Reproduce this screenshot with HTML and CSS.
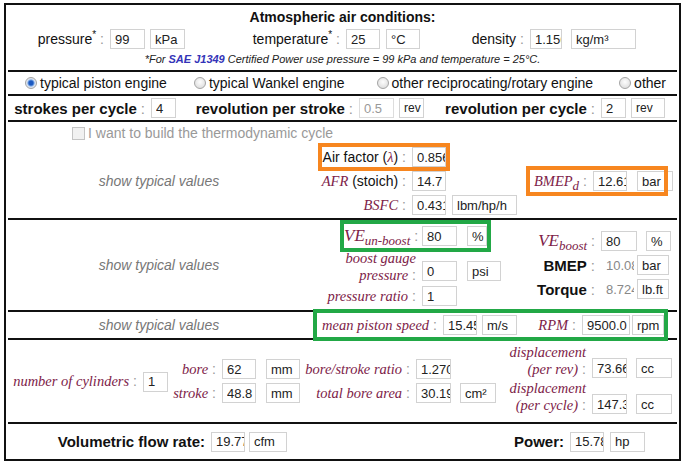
FILE: index.html
```html
<!DOCTYPE html>
<html lang="en">
<head>
  <meta charset="UTF-8">
  <meta name="viewport" content="width=device-width, initial-scale=1.0">
  <title>Engine Power Calculator</title>
  <link rel="stylesheet" href="styles.css">
</head>
<body>

<div class="calc">

  <!-- ambient air -->
  <div class="sec air">
    <div class="title">Atmospheric air conditions:</div>
    <div class="row air-row">
      <span class="lbl w96">pressure<sup>*</sup><span class="c">:</span></span>
      <input class="in w35" value="99">
      <input class="in w35 ml5" value="kPa">
      <span class="lbl w155">temperature<sup>*</sup><span class="c">:</span></span>
      <input class="in w34" value="25">
      <input class="in w34 ml6" value="°C">
      <span class="lbl w104">density<span class="c">:</span></span>
      <input class="in w32" value="1.1568">
      <input class="in w65 ml9" value="kg/m³">
    </div>
    <div class="note">*For <a href="#">SAE J1349</a> Certified Power use pressure = 99 kPa and temperature = 25°C.</div>
  </div>

  <!-- engine type -->
  <div class="sec engines">
    <label class="opt"><input type="radio" name="engine" checked>typical piston engine</label>
    <label class="opt ml27"><input type="radio" name="engine">typical Wankel engine</label>
    <label class="opt ml32"><input type="radio" name="engine">other reciprocating/rotary engine</label>
    <label class="opt ml26"><input type="radio" name="engine">other</label>
  </div>

  <div class="sec row strokes">
    <span class="lbl b w137">strokes per cycle<span class="c">:</span></span>
    <input class="in w25" value="4">
    <span class="lbl b w177">revolution per stroke<span class="c">:</span></span>
    <input class="in w35" value="0.5" disabled>
    <input class="in w25 ml5 small" value="rev">
    <span class="lbl b w171">revolution per cycle<span class="c">:</span></span>
    <input class="in w25" value="2">
    <input class="in w34 ml5 small" value="rev">
  </div>

  <!-- fuel -->
  <div class="sec fuel">
    <label class="thermo"><input type="checkbox" disabled>I want to build the thermodynamic cycle</label>
    <div class="cols">
      <div class="typical">show typical values</div>
      <div class="mid">
        <div class="row r24">
          <span class="hl orange ml12">
            <span class="lbl w84">Air factor (<i class="sym">λ</i>)<span class="c">:</span></span>
            <input class="in w34" value="0.8566">
          </span>
        </div>
        <div class="row r24">
          <span class="lbl w96"><i class="sym">AFR</i> (stoich)<span class="c">:</span></span>
          <input class="in w34" value="14.7">
        </div>
        <div class="row r24">
          <span class="lbl w96"><i class="sym">BSFC</i><span class="c">:</span></span>
          <input class="in w34" value="0.431">
          <input class="in w65 ml6" value="lbm/hp/h">
        </div>
      </div>
      <div class="side pt24">
        <div class="row r24">
          <span class="hl orange bmepd ml13">
            <span class="lbl w57"><i class="sym">BMEP<sub>d</sub></i><span class="c">:</span></span>
            <input class="in w34" value="12.61">
            <input class="in w36 ml10" value="bar">
          </span>
        </div>
      </div>
    </div>
  </div>

  <!-- breathing -->
  <div class="sec cols boost">
    <div class="typical">show typical values</div>
    <div class="mid pt4">
      <div class="row r24">
        <span class="hl green ml34">
          <span class="lbl w72"><i class="sym big">VE<sub>un-boost</sub></i><span class="c">:</span></span>
          <input class="in w35" value="80">
          <input class="in w20 ml10" value="%">
        </span>
      </div>
      <div class="row r34">
        <span class="lbl w106 two"><i class="sym">boost gauge<br>pressure</i><span class="c">:</span></span>
        <input class="in w35 mb3" value="0">
        <input class="in w34 ml10 mb3" value="psi">
      </div>
      <div class="row r20">
        <span class="lbl w106"><i class="sym">pressure ratio</i><span class="c">:</span></span>
        <input class="in w35" value="1">
      </div>
    </div>
    <div class="side pt9">
      <div class="row r24">
        <span class="lbl w78"><i class="sym big">VE<sub>boost</sub></i><span class="c">:</span></span>
        <input class="in w36" value="80">
        <input class="in w25 ml9" value="%">
      </div>
      <div class="row r24">
        <span class="lbl b w78">BMEP<span class="c">:</span></span>
        <input class="in w34 out" value="10.08" readonly>
        <input class="in w32 ml2" value="bar">
      </div>
      <div class="row r24">
        <span class="lbl b w78">Torque<span class="c">:</span></span>
        <input class="in w34 out" value="8.724" readonly>
        <input class="in w32 ml2" value="lb.ft">
      </div>
    </div>
  </div>

  <div class="sec cols speed">
    <div class="typical">show typical values</div>
    <div class="row">
      <span class="hl green ml7">
        <span class="lbl w120"><i class="sym">mean piston speed</i><span class="c">:</span></span>
        <input class="in w34" value="15.45">
        <input class="in w35 ml5" value="m/s">
        <span class="lbl w59"><i class="sym">RPM</i><span class="c">:</span></span>
        <input class="in w48" value="9500.0">
        <input class="in w32 ml2" value="rpm">
      </span>
    </div>
  </div>

  <!-- geometry -->
  <div class="sec geo">
    <div class="row cyl">
      <span class="lbl w129"><i class="sym">number of cylinders</i><span class="c">:</span></span>
      <input class="in w25" value="1">
    </div>
    <div class="stack pt17">
      <div class="row r24">
        <span class="lbl w48"><i class="sym">bore</i><span class="c">:</span></span>
        <input class="in w34" value="62">
        <input class="in w34 ml10" value="mm">
      </div>
      <div class="row r24">
        <span class="lbl w48"><i class="sym">stroke</i><span class="c">:</span></span>
        <input class="in w34" value="48.8">
        <input class="in w34 ml10" value="mm">
      </div>
    </div>
    <div class="stack pt17">
      <div class="row r24">
        <span class="lbl w110"><i class="sym">bore/stroke ratio</i><span class="c">:</span></span>
        <input class="in w35" value="1.2705">
      </div>
      <div class="row r24">
        <span class="lbl w110"><i class="sym">total bore area</i><span class="c">:</span></span>
        <input class="in w35" value="30.19">
        <input class="in w36 ml9" value="cm²">
      </div>
    </div>
    <div class="stack pt4">
      <div class="row r34">
        <span class="lbl w90 two"><i class="sym">displacement<br>(per rev)</i><span class="c">:</span></span>
        <input class="in w35" value="73.66">
        <input class="in w36 ml9" value="cc">
      </div>
      <div class="row r34">
        <span class="lbl w90 two"><i class="sym">displacement<br>(per cycle)</i><span class="c">:</span></span>
        <input class="in w35" value="147.3">
        <input class="in w36 ml9" value="cc">
      </div>
    </div>
  </div>

  <div class="sec row totals">
    <span class="lbl b w197">Volumetric flow rate:</span>
    <input class="in w34" value="19.77">
    <input class="in w38 ml4" value="cfm">
    <span class="lbl b w277">Power:</span>
    <input class="in w34" value="15.78">
    <input class="in w35 ml6" value="hp">
  </div>

</div>

</body>
</html>
```

FILE: styles.css
```css
* {
  box-sizing: border-box;
}

body {
  margin: 0;
  background-color: #fff;
  color: #111;
  font-family: "Liberation Sans", Arial, sans-serif;
  font-size: 14px;
}

.calc {
  width: 677px;
  margin: 3px 0 0 4px;
  padding: 0 2px;
  border: 2px solid #111;
}

.sec {
  border-bottom: 2px solid #111;
}

.sec:last-child {
  border-bottom: 0;
}

.row {
  display: flex;
  align-items: center;
}

/* labels sit right-aligned against their field */
.lbl {
  flex-shrink: 0;
  margin-right: 6px;
  text-align: right;
  white-space: nowrap;
}

.lbl.b {
  font-size: 15px;
  font-weight: bold;
}

.lbl.two {
  white-space: normal;
  line-height: 17px;
}

.c {
  margin-left: 4px;
  color: #999;
  font-weight: normal;
  font-style: normal;
}

sup {
  font-size: 10px;
  line-height: 0;
}

.sym {
  font-family: "Liberation Serif", "Times New Roman", serif;
  font-style: italic;
  font-size: 14.5px;
  color: #7d2248;
}

.sym.big {
  font-size: 17px;
}

.sym sub {
  font-size: 13px;
  line-height: 0;
}

.in {
  flex-shrink: 0;
  height: 20px;
  padding: 0 0 0 4px;
  border: 1px solid #d2d2d2;
  background-color: #fff;
  color: #222;
  font-family: "Liberation Sans", Arial, sans-serif;
  font-size: 13px;
  outline: none;
}

.in.small {
  font-size: 12px;
}

.in:disabled {
  color: #999;
  border-color: #ddd;
}

.in.out {
  border-color: transparent;
  color: #888;
}

/* highlighted field groups */
.hl {
  display: flex;
  align-items: center;
  flex-shrink: 0;
  background-color: #fff;
}

.hl.orange {
  outline: 4px solid #f7861f;
}

.hl.green {
  outline: 4px solid #22a846;
  padding: 2px 0;
}

.hl.bmepd {
  width: 134px;
  padding: 1px 0;
}

/* ambient air block */
.air {
  height: 67px;
  display: flex;
  flex-direction: column;
  align-items: center;
}

.title {
  margin-top: 3px;
  font-weight: bold;
  line-height: 18px;
}

.air-row {
  align-self: stretch;
  height: 20px;
  margin-top: 3px;
}

.note {
  margin-top: 4px;
  font-size: 11px;
  font-style: italic;
  line-height: 13px;
  color: #222;
}

.note a {
  color: #3434b8;
  font-weight: bold;
  text-decoration: none;
}

/* engine type radios */
.engines {
  height: 24px;
  display: flex;
  align-items: center;
  padding-left: 17px;
}

.opt {
  display: flex;
  align-items: center;
  white-space: nowrap;
}

.opt input {
  appearance: none;
  width: 12px;
  height: 12px;
  margin: 0 3px 0 0;
  border: 1px solid #a4a4a4;
  border-radius: 50%;
  background: radial-gradient(circle at 50% 40%, #fdfdfd 0, #d6d6d6 100%);
}

.opt input:checked {
  background: radial-gradient(circle, #1c59c0 0 2px, #6c9ce0 3px, #d7e2f2 4px, #eaeaea 6px);
}

.strokes {
  height: 26px;
}

/* fuel block */
.fuel {
  height: 98px;
  padding-top: 2px;
}

.thermo {
  display: flex;
  align-items: center;
  height: 18px;
  padding-left: 64px;
  color: #999;
}

.thermo input {
  appearance: none;
  width: 13px;
  height: 13px;
  margin: 0 3px 0 0;
  border: 1px solid #c4c4c4;
  background-color: #f1f1f1;
}

.cols {
  display: flex;
}

.fuel .cols {
  margin-top: 3px;
  height: 72px;
}

.typical {
  width: 302px;
  flex-shrink: 0;
  display: flex;
  align-items: center;
  justify-content: center;
  color: #777;
  font-style: italic;
}

.mid {
  width: 207px;
  flex-shrink: 0;
  display: flex;
  flex-direction: column;
}

.boost {
  height: 92px;
}

.boost .mid {
  gap: 2px;
}

.speed {
  height: 28px;
}

.geo {
  height: 84px;
  display: flex;
}

.cyl {
  align-self: center;
  margin-top: 1px;
}

.stack {
  display: flex;
  flex-direction: column;
}

.geo .stack:last-child {
  gap: 2px;
}

.totals {
  height: 35px;
}

.r20 { height: 20px; }
.r24 { height: 24px; }
.r34 { height: 34px; align-items: flex-end; }

.pt4 { padding-top: 4px; }
.pt9 { padding-top: 9px; }
.pt17 { padding-top: 17px; }
.pt24 { padding-top: 24px; }

.mb3 { margin-bottom: 3px; }

.ml2 { margin-left: 2px; }
.ml4 { margin-left: 4px; }
.ml5 { margin-left: 5px; }
.ml6 { margin-left: 6px; }
.ml7 { margin-left: 7px; }
.ml9 { margin-left: 9px; }
.ml10 { margin-left: 10px; }
.ml12 { margin-left: 12px; }
.ml13 { margin-left: 13px; }
.ml26 { margin-left: 26px; }
.ml27 { margin-left: 27px; }
.ml32 { margin-left: 32px; }
.ml34 { margin-left: 34px; }

.w20 { width: 20px; }
.w25 { width: 25px; }
.w32 { width: 32px; }
.w34 { width: 34px; }
.w35 { width: 35px; }
.w36 { width: 36px; }
.w38 { width: 38px; }
.w48 { width: 48px; }
.w57 { width: 57px; }
.w59 { width: 59px; }
.w65 { width: 65px; }
.w72 { width: 72px; }
.w78 { width: 78px; }
.w84 { width: 84px; }
.w90 { width: 90px; }
.w96 { width: 96px; }
.w104 { width: 104px; }
.w106 { width: 106px; }
.w110 { width: 110px; }
.w120 { width: 120px; }
.w129 { width: 129px; }
.w137 { width: 137px; }
.w155 { width: 155px; }
.w171 { width: 171px; }
.w177 { width: 177px; }
.w197 { width: 197px; }
.w277 { width: 277px; }
```
